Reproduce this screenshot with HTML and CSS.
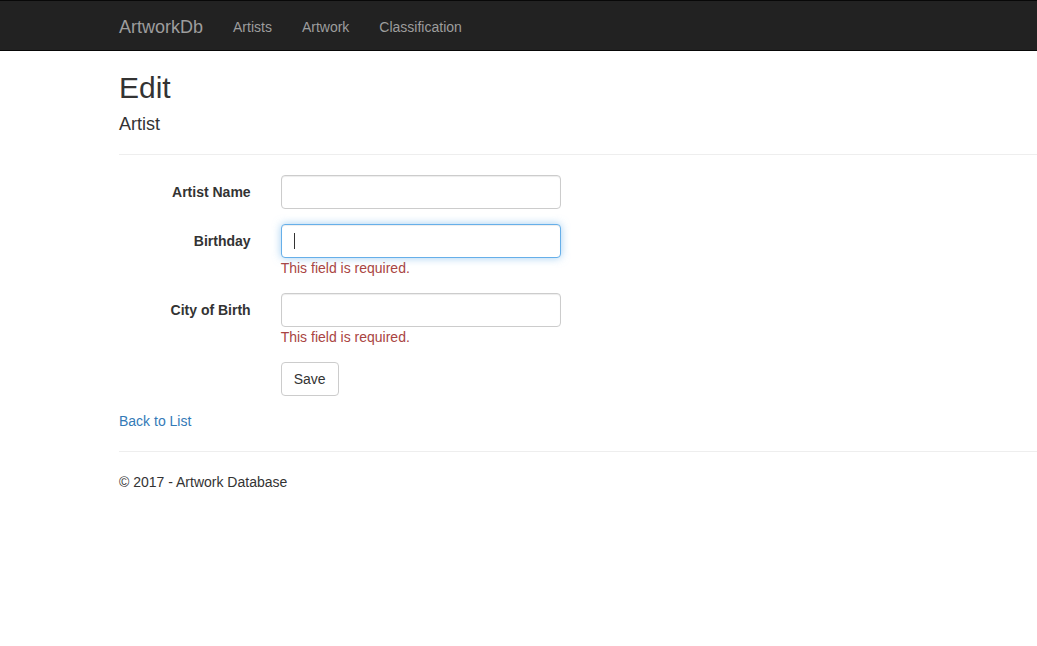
FILE: index.html
```html
<!DOCTYPE html>
<html>
<head>
<meta charset="utf-8">
<title>Edit - ArtworkDb</title>
<link rel="stylesheet" href="styles.css">
</head>
<body>
<div class="navbar">
  <div class="container nav-inner">
    <a class="brand" href="#">ArtworkDb</a>
    <ul class="nav">
      <li><a href="#">Artists</a></li>
      <li><a href="#">Artwork</a></li>
      <li><a href="#">Classification</a></li>
    </ul>
  </div>
</div>
<div class="container body-content">
  <h2 class="title">Edit</h2>
  <form class="form-horizontal">
    <h4 class="subtitle">Artist</h4>
    <hr class="rule">
    <div class="form-group">
      <label class="control-label">Artist Name</label>
      <div class="field"><input class="form-control" type="text"></div>
    </div>
    <div class="form-group">
      <label class="control-label">Birthday</label>
      <div class="field">
        <div class="input-wrap">
          <input class="form-control focused" type="text">
          <span class="caret"></span>
        </div>
        <span class="field-error">This field is required.</span>
      </div>
    </div>
    <div class="form-group">
      <label class="control-label">City of Birth</label>
      <div class="field">
        <input class="form-control" type="text">
        <span class="field-error">This field is required.</span>
      </div>
    </div>
    <div class="form-group">
      <div class="spacer"></div>
      <div class="field"><button type="button" class="btn">Save</button></div>
    </div>
  </form>
  <div class="back"><a href="#">Back to List</a></div>
  <hr class="rule">
  <footer class="footer"><p>&copy; 2017 - Artwork Database</p></footer>
</div>
</body>
</html>
```
FILE: styles.css
```css
* { box-sizing: border-box; }
html, body { overflow: hidden; }
body {
  margin: 0;
  font-family: "Liberation Sans", Arial, Helvetica, sans-serif;
  font-size: 14px;
  line-height: 1.42857143;
  color: #333;
  background: #fff;
}
a { color: #337ab7; text-decoration: none; }

.container {
  width: 970px;
  margin-left: 104px;
  padding-left: 15px;
  padding-right: 15px;
}

.navbar {
  background: #222;
  border-top: 1px solid #080808;
  border-bottom: 1px solid #080808;
  height: 51px;
}
.nav-inner {
  display: flex;
  align-items: stretch;
  height: 49px;
}
.brand {
  color: #9d9d9d;
  font-size: 18px;
  line-height: 20px;
  padding: 16px 15px 13px;
  margin-left: -15px;
}
.nav {
  display: flex;
  list-style: none;
  margin: 0;
  padding: 0;
}
.nav a {
  display: block;
  color: #9d9d9d;
  line-height: 20px;
  padding: 16px 15px 13px;
}

.title {
  font-size: 30px;
  font-weight: 500;
  line-height: 33px;
  margin: 20px 0 10px;
}
.subtitle {
  font-size: 18px;
  font-weight: 500;
  line-height: 19px;
  margin: 11px 0 10px;
}
.rule {
  margin: 20px 0;
  border: 0;
  border-top: 1px solid #eee;
  height: 0;
}

.form-horizontal { margin: 0; }
.form-group {
  display: flex;
  margin: 0 -15px 15px;
}
.control-label, .spacer {
  width: 161.67px;
  flex: none;
  padding: 7px 15px 0;
  text-align: right;
  font-weight: bold;
  margin: 0;
}
.field {
  flex: 1;
  padding: 0 15px;
}
.input-wrap { position: relative; }
.form-control {
  display: block;
  width: 100%;
  max-width: 280px;
  height: 34px;
  padding: 6px 12px;
  font-family: inherit;
  font-size: 14px;
  color: #555;
  background: #fff;
  border: 1px solid #ccc;
  border-radius: 4px;
  box-shadow: inset 0 1px 1px rgba(0,0,0,.075);
  outline: none;
}
.form-control.focused {
  border-color: #66afe9;
  box-shadow: inset 0 1px 1px rgba(0,0,0,.075), 0 0 8px rgba(102,175,233,.6);
}
.caret {
  position: absolute;
  left: 13px;
  top: 9px;
  width: 1px;
  height: 16px;
  background: #333;
}
.field-error {
  display: block;
  color: #a94442;
}
.btn {
  display: inline-block;
  height: 34px;
  padding: 6px 12px;
  font-family: inherit;
  font-size: 14px;
  line-height: 1.42857143;
  color: #333;
  background: #fff;
  border: 1px solid #ccc;
  border-radius: 4px;
}
.back { line-height: 20px; }
.footer p { margin: 0 0 10px; }
```
